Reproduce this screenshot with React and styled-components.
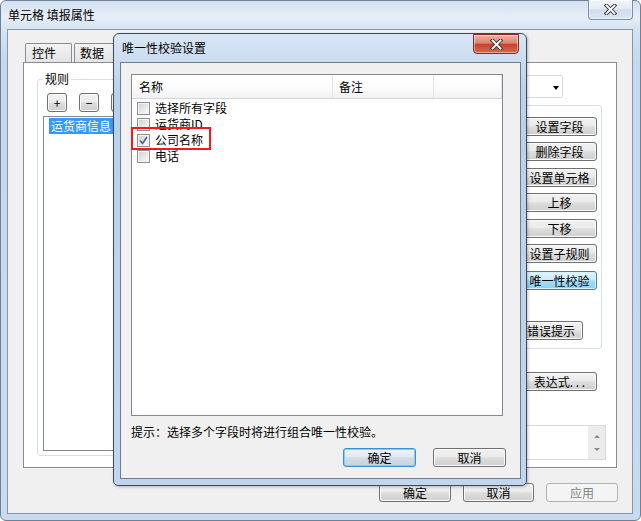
import React from 'react';
import styled, { createGlobalStyle } from 'styled-components';

const GlobalStyle = createGlobalStyle`
  html, body { margin: 0; padding: 0; background: #fff; }
  body {
    font-family: "Noto Sans CJK SC", "Liberation Sans", sans-serif;
    font-size: 12px;
    color: #000;
  }
  * { box-sizing: border-box; }
`;

const Screen = styled.div`
  position: relative;
  width: 641px;
  height: 521px;
  overflow: hidden;
`;

const Window = styled.div`
  width: 641px;
  height: 521px;
  display: flex;
  flex-direction: column;
  border: 1px solid #6f8196;
  border-radius: 6px;
  background: linear-gradient(180deg, #d3e1f1 0px, #e7eef8 16px, #d5e3f2 28px, #c4d8ee 60px, #c9dbef 100%);
`;

const TitleBar = styled.div`
  height: 28px;
  display: flex;
  padding-left: ${p => p.$pad}px;
`;

const TitleText = styled.span`
  align-self: center;
  line-height: 16px;
  color: #000;
  white-space: nowrap;
`;

const CloseBtn = styled.div`
  margin-left: auto;
  margin-right: ${p => p.$right}px;
  margin-top: ${p => p.$top}px;
  width: ${p => p.$w}px;
  height: 20px;
  display: flex;
  align-items: center;
  justify-content: center;
  border: 1px solid ${p => (p.$red ? '#7a2b1e' : '#7d8ea5')};
  border-top: ${p => (p.$red ? '1px solid #7a2b1e' : 'none')};
  border-radius: 0 0 4px 4px;
  background: ${p =>
    p.$red
      ? 'linear-gradient(180deg, #eab0a3 0%, #dc8570 45%, #c5432b 52%, #d4694f 100%)'
      : 'linear-gradient(180deg, #f1f5fa 0%, #e2eaf4 45%, #cfdced 52%, #dbe6f2 100%)'};
  box-shadow: inset 0 0 0 1px rgba(255, 255, 255, 0.45);
`;

const XIcon = () => (
  <svg width="13" height="11" viewBox="0 0 13 11">
    <path d="M2.5 1.5 L10.5 9.5 M10.5 1.5 L2.5 9.5" stroke="#3c3c3c" strokeWidth="3.8" strokeLinecap="square" />
    <path d="M2.5 1.5 L10.5 9.5 M10.5 1.5 L2.5 9.5" stroke="#ffffff" strokeWidth="1.8" strokeLinecap="square" />
  </svg>
);

const Client = styled.div`
  flex: 1;
  margin: 0 7px 6px 6px;
  border: 1px solid #8a96a6;
  background: #f0f0f0;
  padding: 13px 15px 0 15px;
  display: flex;
  flex-direction: column;
`;

const TabStrip = styled.div`
  display: flex;
  gap: 2px;
  padding-left: 2px;
  height: 19px;
`;

const Tab = styled.div`
  width: 47px;
  height: 19px;
  padding-left: ${p => p.$pad}px;
  line-height: 18px;
  border: 1px solid #898c95;
  border-bottom: none;
  border-radius: 2px 2px 0 0;
  background: linear-gradient(180deg, #f3f3f3, #e4e4e4);
`;

const TabPanel = styled.div`
  height: 406px;
  border: 1px solid #898c95;
  background: #fff;
  display: flex;
  padding: 0 10px 0 13px;
`;

const GroupBox = styled.fieldset`
  margin: 8px 0 0 0;
  width: 300px;
  height: 385px;
  border: 1px solid #d5dfe5;
  border-radius: 3px;
  padding: 6px 5px 4px 5px;
  min-width: 0;
`;

const Legend = styled.legend`
  padding: 0 2px;
  line-height: 16px;
`;

const ToolRow = styled.div`
  display: flex;
  gap: 12px;
  padding-left: 4px;
  height: 19px;
`;

const Button = styled.div`
  flex: none;
  width: ${p => p.$w}px;
  height: 19px;
  margin-top: ${p => p.$mt || 0}px;
  margin-right: ${p => p.$mr || 0}px;
  display: flex;
  align-items: center;
  justify-content: center;
  line-height: 16px;
  white-space: nowrap;
  border: 1px solid #707070;
  border-radius: 3px;
  background: linear-gradient(180deg, #f2f2f2 0%, #ebebeb 45%, #dddddd 52%, #cfcfcf 100%);
  box-shadow: inset 0 0 0 1px #fbfbfb;
  color: #000;

  &[data-kind='hot'] {
    border-color: #3c7fb1;
    background: linear-gradient(180deg, #e3f5fe 0%, #c9ecfd 45%, #a4dcf7 52%, #8fd0f2 100%);
    box-shadow: inset 0 0 0 1px #d8f2fd;
  }
  &[data-kind='default'] {
    border-color: #3c8fcf;
    background: linear-gradient(180deg, #eef3f8 0%, #e2eaf1 45%, #d2dce6 52%, #c8d4df 100%);
    box-shadow: inset 0 0 0 1px #7fd1f3;
  }
  &[data-kind='off'] {
    border-color: #adb2b5;
    background: #f4f4f4;
    box-shadow: none;
    color: #838383;
  }
`;

const ListBox = styled.div`
  margin-top: 4px;
  height: 335px;
  border: 1px solid #828790;
  background: #fff;
  padding-top: 0;
`;

const SelectedItem = styled.span`
  display: inline-block;
  margin-left: 5px;
  padding: 0 2px;
  height: 16px;
  line-height: 16px;
  background: #3399ff;
  color: #fff;
`;

const RightCol = styled.div`
  margin-left: auto;
  width: 94px;
  display: flex;
  flex-direction: column;
  align-items: flex-end;
`;

const Combo = styled.div`
  margin-top: 12px;
  margin-right: 43px;
  width: 80px;
  height: 23px;
  border: 1px solid #dadada;
  border-radius: 2px;
  background: #fff;
  display: flex;
  align-items: center;
  justify-content: flex-end;
  padding-right: 3px;
`;

const Arrow = styled.span`
  width: 0;
  height: 0;
  margin-top: 2px;
  border-left: 3.5px solid transparent;
  border-right: 3.5px solid transparent;
  border-top: ${p => (p.$up ? '0' : '4px solid #000')};
  border-bottom: ${p => (p.$up ? '4px solid #000' : '0')};
`;

const ButtonGroup = styled.div`
  margin-top: 7px;
  margin-right: 4px;
  width: 90px;
  height: 244px;
  border: 1px solid #d5dfe5;
  border-radius: 3px;
  padding: 11px 4px 0 0;
  display: flex;
  flex-direction: column;
  align-items: flex-end;
`;

const TextBox = styled.div`
  margin-top: 34px;
  width: 90px;
  height: 35px;
  border: 1px solid #dadada;
  background: #fff;
  display: flex;
  justify-content: flex-end;
`;

const ScrollTrack = styled.div`
  width: 17px;
  height: 100%;
  background: #ececec;
  display: flex;
  flex-direction: column;
  align-items: center;
  justify-content: space-between;
  padding: 9px 0 8px;
`;

const SmallArrow = styled.span`
  width: 0;
  height: 0;
  border-left: 3px solid transparent;
  border-right: 3px solid transparent;
  border-top: ${p => (p.$up ? '0' : '3px solid #8c8c8c')};
  border-bottom: ${p => (p.$up ? '3px solid #8c8c8c' : '0')};
`;

const BottomRow = styled.div`
  margin-top: 15px;
  margin-right: -1px;
  display: flex;
  justify-content: flex-end;
  gap: 12px;
`;

/* dialog floating over the property window */
const Dialog = styled.div`
  position: absolute;
  left: 113px;
  top: 33px;
  width: 414px;
  height: 453px;
  display: flex;
  flex-direction: column;
  border: 1px solid #3b4b5e;
  border-radius: 6px 6px 5px 5px;
  background: linear-gradient(180deg, #d9e6f4 0px, #cadcf0 28px, #b9d1eb 60px, #c1d6ee 100%);
  box-shadow: 1px 1px 3px rgba(0, 0, 0, 0.25);
`;

const DialogClient = styled.div`
  flex: 1;
  margin: 0 5px 6px 6px;
  border: 1px solid #6f7c8c;
  background: #f0f0f0;
  padding: 11px 14px 0 10px;
  display: flex;
  flex-direction: column;
`;

const ListView = styled.div`
  position: relative;
  width: 372px;
  height: 342px;
  border: 1px solid #828790;
  background: #fff;
`;

const Header = styled.div`
  display: grid;
  grid-template-columns: 201px 101px 1fr;
  height: 24px;
  border-bottom: 1px solid #d5d5d5;
  background: linear-gradient(180deg, #ffffff 0%, #fbfbfc 55%, #f1f2f4 100%);
`;

const HeaderCell = styled.div`
  padding-left: ${p => p.$pad}px;
  line-height: 23px;
  border-right: 1px solid #e3e4e6;
`;

const Rows = styled.div`
  padding-top: 1px;
`;

const Row = styled.div`
  height: 16px;
  display: flex;
  align-items: center;
  gap: 5px;
  padding-left: 5px;
  line-height: 16px;
`;

const Check = styled.span`
  width: 13px;
  height: 13px;
  flex: none;
  border: 1px solid #8e8f8f;
  background: linear-gradient(135deg, #cfcfcf 0%, #e6e6e6 50%, #fbfbfb 100%);
  box-shadow: inset 0 0 0 1px #f4f4f4;
  display: flex;
  align-items: center;
  justify-content: center;
`;

const Highlight = styled.div`
  position: absolute;
  left: -1px;
  top: 52px;
  width: 80px;
  height: 23px;
  border: 2px solid #f21a1a;
`;

const Hint = styled.div`
  margin-top: 8px;
  line-height: 16px;
  white-space: nowrap;
`;

const DialogButtons = styled.div`
  margin-top: 8px;
  display: flex;
  justify-content: flex-end;
  gap: 17px;
`;

const fields = [
  { name: '选择所有字段', checked: false },
  { name: '运货商ID', checked: false },
  { name: '公司名称', checked: true },
  { name: '电话', checked: false },
];

const sideButtons = [
  { label: '设置字段', mt: 0 },
  { label: '删除字段', mt: 6 },
  { label: '设置单元格', mt: 7 },
  { label: '上移', mt: 6 },
  { label: '下移', mt: 7 },
  { label: '设置子规则', mt: 6 },
  { label: '唯一性校验', mt: 8, kind: 'hot' },
];

export default function App() {
  return (
    <Screen>
      <GlobalStyle />
      <Window>
        <TitleBar $pad={7}>
          <TitleText>单元格 填报属性</TitleText>
          <CloseBtn $w={45} $right={7} $top={-1}>
            <XIcon />
          </CloseBtn>
        </TitleBar>
        <Client>
          <TabStrip>
            <Tab $pad={6}>控件</Tab>
            <Tab $pad={5}>数据</Tab>
          </TabStrip>
          <TabPanel>
            <GroupBox>
              <Legend>规则</Legend>
              <ToolRow>
                <Button $w={20}>+</Button>
                <Button $w={20}>−</Button>
                <Button $w={20} />
              </ToolRow>
              <ListBox>
                <SelectedItem>运货商信息</SelectedItem>
              </ListBox>
            </GroupBox>
            <RightCol>
              <Combo>
                <Arrow />
              </Combo>
              <ButtonGroup>
                {sideButtons.map(b => (
                  <Button key={b.label} $w={75} $mt={b.mt} data-kind={b.kind}>
                    {b.label}
                  </Button>
                ))}
                <Button $w={64} $mt={31} $mr={14}>错误提示</Button>
              </ButtonGroup>
              <Button $w={75} $mt={23} $mr={9}>表达式. . .</Button>
              <TextBox>
                <ScrollTrack>
                  <SmallArrow $up />
                  <SmallArrow />
                </ScrollTrack>
              </TextBox>
            </RightCol>
          </TabPanel>
          <BottomRow>
            <Button $w={72}>确定</Button>
            <Button $w={71}>取消</Button>
            <Button $w={72} data-kind="off">应用</Button>
          </BottomRow>
        </Client>
      </Window>

      <Dialog>
        <TitleBar $pad={8}>
          <TitleText>唯一性校验设置</TitleText>
          <CloseBtn $w={46} $right={7} $top={0} $red>
            <XIcon />
          </CloseBtn>
        </TitleBar>
        <DialogClient>
          <ListView>
            <Header>
              <HeaderCell $pad={7}>名称</HeaderCell>
              <HeaderCell $pad={6}>备注</HeaderCell>
              <HeaderCell $pad={6} />
            </Header>
            <Rows>
              {fields.map(f => (
                <Row key={f.name}>
                  <Check>
                    {f.checked && (
                      <svg width="9" height="9" viewBox="0 0 9 9">
                        <path d="M1 4.5 L3.5 7.5 L8 1" fill="none" stroke="#4a5e93" strokeWidth="1.6" />
                      </svg>
                    )}
                  </Check>
                  <span>{f.name}</span>
                </Row>
              ))}
            </Rows>
            <Highlight />
          </ListView>
          <Hint>提示：选择多个字段时将进行组合唯一性校验。</Hint>
          <DialogButtons>
            <Button $w={73} data-kind="default">确定</Button>
            <Button $w={73}>取消</Button>
          </DialogButtons>
        </DialogClient>
      </Dialog>
    </Screen>
  );
}
